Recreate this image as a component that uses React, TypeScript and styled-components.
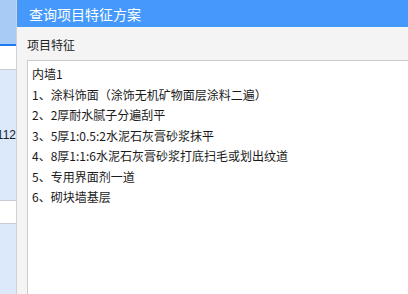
import styled, { createGlobalStyle } from "styled-components";

const Global = createGlobalStyle`
  html, body {
    margin: 0;
    padding: 0;
    height: 100%;
    overflow: hidden;
    background: #ffffff;
  }
  #root {
    height: 100%;
  }
`;

const Page = styled.div`
  display: flex;
  height: 294px;
  width: 408px;
  overflow: hidden;
  font-family: "Noto Sans CJK SC", "Noto Sans", sans-serif;
  color: #1f1f1f;
`;

const Strip = styled.div`
  flex: 0 0 16px;
  display: flex;
  flex-direction: column;
  background: #dce9fb;
  border-right: 1px solid #cfd3d8;
  overflow: hidden;
`;

const StripHead = styled.div`
  height: 44px;
  background: #a8cbf5;
  border-bottom: 2px solid #1b7af0;
`;

const StripRow = styled.div<{ $white?: boolean; $height: number }>`
  height: ${({ $height }) => $height}px;
  background: ${({ $white }) => ($white ? "#ffffff" : "transparent")};
  border-bottom: 1px solid #c8ccd2;
  display: flex;
  align-items: center;
  justify-content: flex-end;
  font-family: "Liberation Sans", Arial, sans-serif;
  font-size: 12px;
  color: #222;
  white-space: nowrap;
`;

const Value = styled.span`
  margin-top: -1px;
`;

const Dialog = styled.div`
  flex: 0 0 auto;
  width: 420px;
  display: flex;
  flex-direction: column;
  background: #f4f4f4;
`;

const TitleBar = styled.div`
  height: 27px;
  flex: 0 0 27px;
  display: flex;
  align-items: center;
  padding-left: 12px;
  background: #4599fc;
  color: #ffffff;
  font-size: 14px;
`;

const Body = styled.div`
  flex: 1;
  display: flex;
  flex-direction: column;
  padding: 8px 0 0 10px;
`;

const Label = styled.div`
  font-size: 12px;
  line-height: 20px;
  height: 20px;
  margin-bottom: 5px;
  color: #222;
`;

const Field = styled.textarea`
  flex: 1;
  display: block;
  margin: 0;
  padding: 3px 4px;
  border: 1px solid #cccccc;
  border-right: none;
  border-bottom: none;
  outline: none;
  resize: none;
  background: #ffffff;
  font-family: "Noto Sans CJK SC", "Noto Sans", sans-serif;
  font-size: 12px;
  line-height: 20.5px;
  color: #1a1a1a;
  overflow: hidden;
`;

const text = [
  "内墙1",
  "1、涂料饰面（涂饰无机矿物面层涂料二遍）",
  "2、2厚耐水腻子分遍刮平",
  "3、5厚1:0.5:2水泥石灰膏砂浆抹平",
  "4、8厚1:1:6水泥石灰膏砂浆打底扫毛或划出纹道",
  "5、专用界面剂一道",
  "6、砌块墙基层",
].join("\n");

export default function App() {
  return (
    <>
      <Global />
      <Page>
        <Strip>
          <StripHead />
          <StripRow $white $height={23} />
          <StripRow $height={130}>
            <Value>112</Value>
          </StripRow>
          <StripRow $white $height={22} />
        </Strip>
        <Dialog>
          <TitleBar>查询项目特征方案</TitleBar>
          <Body>
            <Label>项目特征</Label>
            <Field readOnly value={text} />
          </Body>
        </Dialog>
      </Page>
    </>
  );
}
